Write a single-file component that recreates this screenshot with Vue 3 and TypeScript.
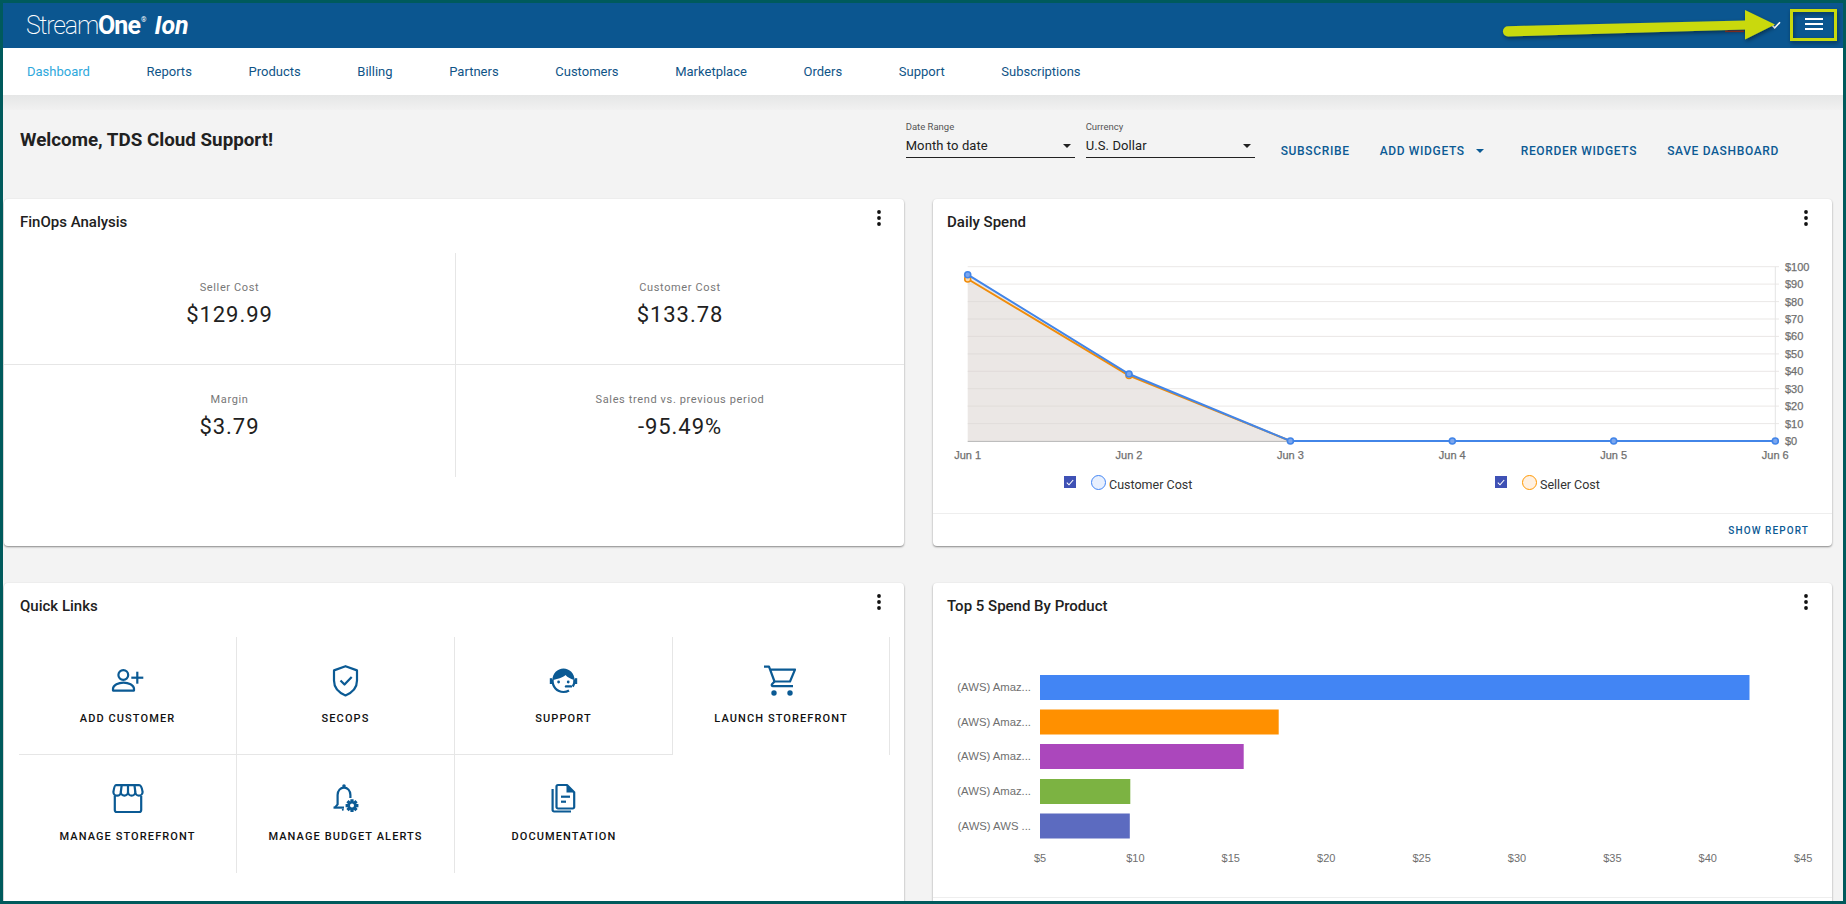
<script setup lang="ts">
interface QuickLink { label: string; stroke: string[]; fill: string[] }

const circle = (cx: number, cy: number, r: number): string =>
  `M${cx - r} ${cy}a${r} ${r} 0 1 0 ${r * 2} 0a${r} ${r} 0 1 0 ${-r * 2} 0Z`

const gear = (cx: number, cy: number, outer: number, inner: number, hole: number): string => {
  const pts: string[] = []
  for (let i = 0; i < 8; i++) {
    const a = (i * Math.PI) / 4
    const w = 0.3
    const p = [
      [inner, a - w * 1.25],
      [outer, a - w * 0.8],
      [outer, a + w * 0.8],
      [inner, a + w * 1.25]
    ]
    for (const [r, t] of p) pts.push(`${(cx + r * Math.cos(t)).toFixed(2)} ${(cy + r * Math.sin(t)).toFixed(2)}`)
  }
  return `M${pts.join('L')}Z${circle(cx, cy, hole)}`
}

const navItems = ['Dashboard', 'Reports', 'Products', 'Billing', 'Partners', 'Customers', 'Marketplace', 'Orders', 'Support', 'Subscriptions']

const stats = [
  { label: 'Seller Cost', value: '$129.99' },
  { label: 'Customer Cost', value: '$133.78' },
  { label: 'Margin', value: '$3.79' },
  { label: 'Sales trend vs. previous period', value: '-95.49%' }
]

const links: QuickLink[] = [
  {
    label: 'Add Customer',
    stroke: [circle(15.3, 11, 4.9), 'M5 26.6v-1.8c0-3.8 5.6-6.2 10.5-6.2s10.5 2.4 10.5 6.2v1.8Z', 'M29.3 7.7v12', 'M23.3 13.7h12'],
    fill: []
  },
  {
    label: 'SecOps',
    stroke: ['M19.5 2.2L31 6.4V16.5C31 23.5 26.3 28.6 19.5 31.4C12.7 28.6 8 23.5 8 16.5V6.4Z', 'M14.5 16.5l4 4l7.2-7.6'],
    fill: []
  },
  {
    label: 'Support',
    stroke: ['M8.6 15.5C8.2 23 13 28 19.5 28C21.5 28 23.4 27.5 25 26.5', 'M30.4 15.5C30.6 18 30.2 20.5 28.8 22.5'],
    fill: [
      'M8.4 16C8.4 9.5 13.5 4.4 19.5 4.4S30.6 9.5 30.6 16C27 15 23.5 13.5 21.5 11C19 13.5 13 15.5 8.4 16Z',
      'M5.8 14.2h2.4v5.8h-2.4Z',
      'M30.8 14.2h2.4v5.8h-2.4Z',
      circle(14.6, 18, 1.4),
      circle(24.2, 18, 1.4),
      'M22 21.2h5a1.2 1.2 0 0 1 0 2.4h-5a1.2 1.2 0 0 1 0-2.4Z'
    ]
  },
  {
    label: 'Launch Storefront',
    stroke: ['M3 2.6H8L13.5 17.5H29L34 5.6H9.2', 'M13.5 17.5L11 20.2C10.4 21 10.8 22.2 12 22.2H32'],
    fill: [circle(13, 29, 2.7), circle(29, 29, 2.7)]
  },
  {
    label: 'Manage Storefront',
    stroke: [
      'M8 3.2H31C33 3.2 34 6 34.6 10A3.6 3.6 0 0 1 27.3 10A3.6 3.6 0 0 1 20 10A3.6 3.6 0 0 1 12.8 10A3.6 3.6 0 0 1 5.4 10C6 6 7 3.2 8 3.2Z',
      'M12.8 10L13.6 3.5', 'M20 10V3.5', 'M27.3 10L26.5 3.5',
      'M6.8 14V28a2 2 0 0 0 2 2H31.2a2 2 0 0 0 2-2V14'
    ],
    fill: []
  },
  {
    label: 'Manage Budget Alerts',
    stroke: ['M7.5 25.6H18', 'M9 25.6L11.6 22.4V13C11.6 8.5 14.5 5.6 18 5.6C21.5 5.6 24.4 8.5 24.4 13V16'],
    fill: [circle(18, 4, 1.8), circle(16.8, 27.8, 1), gear(26, 23.6, 6.6, 4.6, 2)]
  },
  {
    label: 'Documentation',
    stroke: [
      'M14 3H23L30.2 10.2V25A1.5 1.5 0 0 1 28.7 26.5H14A1.5 1.5 0 0 1 12.5 25V4.5A1.5 1.5 0 0 1 14 3Z',
      'M8.6 7V28A1.5 1.5 0 0 0 10.1 29.5H27',
      'M17 14.7H26', 'M17 19.7H22'
    ],
    fill: ['M22.5 3V10.5H30.2Z']
  }
]

const yTop = 266.7
const yBottom = 441
const yStep = (yBottom - yTop) / 10
const gridLines = Array.from({ length: 11 }, (_, i) => ({
  y: +(yTop + i * yStep).toFixed(1),
  label: `$${100 - i * 10}`
}))
const days = [
  { x: 967.7, label: 'Jun 1', cust: 274.7, sell: 279 },
  { x: 1129, label: 'Jun 2', cust: 374, sell: 375.6 },
  { x: 1290.4, label: 'Jun 3', cust: 441, sell: 441 },
  { x: 1452.3, label: 'Jun 4', cust: 441, sell: 441 },
  { x: 1613.7, label: 'Jun 5', cust: 441, sell: 441 },
  { x: 1775.3, label: 'Jun 6', cust: 441, sell: 441 }
]
const custLine = days.map((d) => `${d.x},${d.cust}`).join(' ')
const sellLine = days.map((d) => `${d.x},${d.sell}`).join(' ')
const areaPoly = `${days[0].x},${yBottom} ${custLine} ${days[5].x},${yBottom}`

const bars = [
  { label: '(AWS) Amaz...', y: 675, end: 1749.5, color: '#4285f4' },
  { label: '(AWS) Amaz...', y: 709.5, end: 1278.7, color: '#ff9000' },
  { label: '(AWS) Amaz...', y: 744, end: 1243.7, color: '#ab47bc' },
  { label: '(AWS) Amaz...', y: 779, end: 1130.3, color: '#7cb342' },
  { label: '(AWS) AWS ...', y: 813.5, end: 1129.8, color: '#5c6bc0' }
]
const barTicks = Array.from({ length: 9 }, (_, i) => ({ x: 1040 + i * 95.4, label: `$${5 + i * 5}` }))
</script>

<template>
  <div class="frame">
    <header class="topbar">
      <div class="logo">
        <span class="logo-light">Stream</span><span class="logo-bold">One</span><sup class="logo-reg">®</sup>
        <span class="logo-ion">Ion</span>
      </div>
      <svg class="top-check" width="10" height="8" viewBox="0 0 10 8">
        <path d="M1 4.2L3.7 6.8L9 1.2" fill="none" stroke="#fff" stroke-width="1.6" />
      </svg>
      <button class="burger" type="button" aria-label="Menu">
        <span></span><span></span><span></span>
      </button>
    </header>

    <nav class="nav">
      <a v-for="(item, i) in navItems" :key="item" class="nav-item" :class="{ active: i === 0 }">{{ item }}</a>
    </nav>
    <div class="nav-shadow"></div>

    <section class="toolbar">
      <h1 class="welcome">Welcome, TDS Cloud Support!</h1>
      <div class="controls">
        <div class="select">
          <label>Date Range</label>
          <div class="select-value">Month to date<i class="caret"></i></div>
        </div>
        <div class="select">
          <label>Currency</label>
          <div class="select-value">U.S. Dollar<i class="caret"></i></div>
        </div>
        <div class="actions">
          <a class="action">SUBSCRIBE</a>
          <a class="action">ADD WIDGETS<i class="caret blue"></i></a>
          <a class="action">REORDER WIDGETS</a>
          <a class="action">SAVE DASHBOARD</a>
        </div>
      </div>
    </section>

    <main class="board">
      <article class="card">
        <div class="card-head">
          <h2>FinOps Analysis</h2>
          <svg class="more" width="4" height="16" viewBox="0 0 4 16"><circle cx="2" cy="2" r="1.9" /><circle cx="2" cy="8" r="1.9" /><circle cx="2" cy="14" r="1.9" /></svg>
        </div>
        <div class="stats">
          <div v-for="s in stats" :key="s.label" class="stat">
            <div class="stat-label">{{ s.label }}</div>
            <div class="stat-value">{{ s.value }}</div>
          </div>
        </div>
      </article>

      <article class="card">
        <div class="card-head">
          <h2>Daily Spend</h2>
          <svg class="more" width="4" height="16" viewBox="0 0 4 16"><circle cx="2" cy="2" r="1.9" /><circle cx="2" cy="8" r="1.9" /><circle cx="2" cy="14" r="1.9" /></svg>
        </div>
        <svg class="chart" width="899" height="218" viewBox="933 247 899 218">
          <polygon :points="areaPoly" fill="#ebe7e5" />
          <line v-for="g in gridLines" :key="g.y" :x1="967.7" :x2="1779" :y1="g.y" :y2="g.y" stroke="#d8d4d2" stroke-opacity=".55" />
          <line x1="1775.3" x2="1775.3" y1="266.7" y2="441" stroke="#e4e4e4" />
          <line x1="967.7" x2="1775" y1="441.5" y2="441.5" stroke="#bdbdbd" />
          <polyline :points="sellLine" fill="none" stroke="#f08c0a" stroke-width="2" />
          <circle v-for="d in days.slice(0, 2)" :key="d.label" :cx="d.x" :cy="d.sell" r="3" fill="#fbd9ad" stroke="#f08c0a" stroke-width="1.5" />
          <polyline :points="custLine" fill="none" stroke="#4285e8" stroke-width="2" />
          <circle v-for="d in days" :key="d.label" :cx="d.x" :cy="d.cust" r="3" fill="#7ba6ee" stroke="#4285e8" stroke-width="1.6" />
          <text v-for="g in gridLines" :key="g.label" x="1785" :y="g.y + 4" class="axis heavy">{{ g.label }}</text>
          <text v-for="d in days" :key="d.label" :x="d.x" y="459" class="axis mid heavy">{{ d.label }}</text>
        </svg>
        <div class="legend">
          <div class="legend-item first">
            <span class="check"><svg width="8" height="7" viewBox="0 0 8 7"><path d="M.8 3.6L3 5.8L7.2 1" fill="none" stroke="#fff" stroke-width="1.1" /></svg></span>
            <span class="dot dot-blue"></span>
            <span class="legend-text">Customer Cost</span>
          </div>
          <div class="legend-item second">
            <span class="check"><svg width="8" height="7" viewBox="0 0 8 7"><path d="M.8 3.6L3 5.8L7.2 1" fill="none" stroke="#fff" stroke-width="1.1" /></svg></span>
            <span class="dot dot-orange"></span>
            <span class="legend-text">Seller Cost</span>
          </div>
        </div>
        <div class="card-foot"><a class="show-report">SHOW REPORT</a></div>
      </article>

      <article class="card">
        <div class="card-head">
          <h2>Quick Links</h2>
          <svg class="more" width="4" height="16" viewBox="0 0 4 16"><circle cx="2" cy="2" r="1.9" /><circle cx="2" cy="8" r="1.9" /><circle cx="2" cy="14" r="1.9" /></svg>
        </div>
        <div class="links">
          <div v-for="l in links" :key="l.label" class="link">
            <svg class="link-icon" width="40" height="34" viewBox="0 0 40 34">
              <path v-for="d in l.stroke" :key="d" :d="d" fill="none" stroke="#0b5a94" stroke-width="2.2" stroke-linejoin="round" />
              <path v-for="d in l.fill" :key="d" :d="d" fill="#0b5a94" fill-rule="evenodd" />
            </svg>
            <div class="link-label">{{ l.label }}</div>
          </div>
        </div>
      </article>

      <article class="card">
        <div class="card-head">
          <h2>Top 5 Spend By Product</h2>
          <svg class="more" width="4" height="16" viewBox="0 0 4 16"><circle cx="2" cy="2" r="1.9" /><circle cx="2" cy="8" r="1.9" /><circle cx="2" cy="14" r="1.9" /></svg>
        </div>
        <svg class="chart" width="899" height="240" viewBox="933 631 899 240">
          <g v-for="b in bars" :key="b.y">
            <rect x="1040" :y="b.y" :width="b.end - 1040" height="25" :fill="b.color" />
            <text x="1031" :y="b.y + 16" class="axis end wide">{{ b.label }}</text>
          </g>
          <text v-for="t in barTicks" :key="t.label" :x="t.x" y="862" class="axis mid">{{ t.label }}</text>
        </svg>
        <div class="bar-foot"></div>
      </article>
    </main>

    <svg class="annotation" width="1840" height="60" viewBox="3 3 1840 60">
      <defs>
        <filter id="arrow-shadow" x="-5%" y="-40%" width="110%" height="200%">
          <feDropShadow dx="1" dy="2" stdDeviation="2" flood-color="#000" flood-opacity=".45" />
        </filter>
      </defs>
      <rect x="1725" y="30.5" width="19" height="1.6" fill="#a33a2a" />
      <g filter="url(#arrow-shadow)">
        <path d="M1508 26.2L1745 20.4V10L1775 24.5L1745 39.4V29.6L1508 36.4A5.1 5.1 0 0 1 1508 26.2Z" fill="#c9d90f" />
        <rect x="1791.5" y="10.5" width="44" height="29" fill="none" stroke="#c9d90f" stroke-width="3" />
      </g>
    </svg>
  </div>
</template>

<style>
html, body { margin: 0; padding: 0; }
</style>

<style scoped>
.frame {
  position: relative;
  box-sizing: border-box;
  width: 1846px;
  height: 904px;
  overflow: hidden;
  border: 3px solid #005a5c;
  background: #f3f3f3;
  font-family: Roboto, "Liberation Sans", sans-serif;
  color: #212121;
}

.topbar {
  display: flex;
  align-items: center;
  height: 45px;
  background: #0b5690;
  color: #fff;
}
.logo {
  margin-left: 23px;
  font-size: 25px;
  line-height: 45px;
  white-space: nowrap;
  display: flex;
  align-items: baseline;
}
.logo-light { font-weight: 200; letter-spacing: -1.2px; }
.logo-bold { font-weight: 700; letter-spacing: -.9px; }
.logo-reg { font-size: 7px; line-height: 1; position: relative; top: -12px; margin-left: 1px; }
.logo-ion { font-weight: 700; font-style: italic; margin-left: 8px; letter-spacing: -.2px; }
.top-check { margin-left: auto; margin-top: -2px; }
.burger {
  display: flex;
  flex-direction: column;
  gap: 3px;
  width: 18px;
  margin: -3px 20px 0 24px;
  padding: 0;
  border: 0;
  background: none;
}
.burger span { display: block; height: 2px; background: #fff; }

.nav {
  display: flex;
  align-items: center;
  height: 47px;
  padding-left: 24px;
  background: #fff;
}
.nav-item {
  margin-right: 56.67px;
  font-size: 13px;
  color: #0f5487;
}
.nav-item.active { color: #2ea8dc; }
.nav-shadow {
  height: 15px;
  background: linear-gradient(#e5e6e6, #f1f1f1);
}

.toolbar {
  display: flex;
  justify-content: space-between;
  height: 89px;
  padding: 0 64px 0 17px;
}
.welcome {
  margin: 19px 0 0;
  font-size: 18.8px;
  line-height: 22px;
  font-weight: 700;
}
.controls { display: flex; }
.select {
  box-sizing: border-box;
  width: 169px;
  height: 37px;
  margin: 11px 11px 0 0;
  border-bottom: 1px solid #212121;
}
.select label {
  display: block;
  font-size: 9.5px;
  line-height: 12px;
  color: #555;
}
.select-value {
  display: flex;
  justify-content: space-between;
  align-items: center;
  margin-top: 4px;
  font-size: 13px;
  line-height: 18px;
  letter-spacing: .1px;
}
.caret {
  display: inline-block;
  width: 0;
  height: 0;
  margin-right: 4px;
  border-left: 4px solid transparent;
  border-right: 4px solid transparent;
  border-top: 4px solid #212121;
}
.caret.blue { margin: 0 7px 0 11px; border-top-color: #0b5a94; }
.actions {
  display: flex;
  gap: 30px;
  margin: 33px 0 0 15px;
  height: 16px;
}
.action {
  display: flex;
  align-items: center;
  font-size: 12px;
  font-weight: 500;
  line-height: 16px;
  letter-spacing: .65px;
  color: #0b5a94;
  white-space: nowrap;
}

.board {
  display: grid;
  grid-template-columns: 900px 899px;
  grid-template-rows: 347px 340px;
  column-gap: 29px;
  row-gap: 37px;
  padding-left: 1px;
}
.card {
  border-radius: 4px;
  background: #fff;
  box-shadow: 0 1px 2px rgba(0, 0, 0, .45);
}
.card-head {
  display: flex;
  justify-content: space-between;
  align-items: flex-start;
  height: 48px;
  padding: 0 24px 0 14px;
}
.card:nth-child(odd) .card-head { padding: 0 23px 0 16px; }
.card-head h2 {
  margin: 14px 0 0;
  font-size: 15px;
  line-height: 18px;
  font-weight: 500;
}
.more { margin-top: 11px; fill: #111; }

.stats {
  display: grid;
  grid-template-columns: 452px 448px;
  grid-template-rows: 112px 112px;
  margin-top: 6px;
  text-align: center;
}
.stat { padding-top: 28px; box-sizing: border-box; }
.stat:nth-child(odd) { border-right: 1px solid #e6e6e6; }
.stat:nth-child(-n+2) { border-bottom: 1px solid #e6e6e6; }
.stat-label {
  font-size: 11px;
  line-height: 14px;
  letter-spacing: .63px;
  color: #777;
}
.stat-value {
  margin-top: 6px;
  font-size: 22px;
  line-height: 28px;
  letter-spacing: .95px;
}

.chart { display: block; }
.axis {
  font-family: "Liberation Sans", Arial, sans-serif;
  font-size: 11px;
  fill: #6f6f6f;
}
.axis.heavy { stroke: #6f6f6f; stroke-width: .25px; }
.axis.mid { text-anchor: middle; }
.axis.end { text-anchor: end; }
.axis.wide { font-size: 11.3px; }

.legend { display: flex; height: 48px; }
.legend-item { display: flex; align-items: flex-start; padding-top: 11px; }
.legend-item.first { margin-left: 131px; width: 431px; }
.check {
  display: flex;
  align-items: center;
  justify-content: center;
  width: 12px;
  height: 12px;
  background: #3f51b5;
}
.dot {
  box-sizing: border-box;
  width: 15px;
  height: 15px;
  margin: -1.5px 3px 0 15px;
  border-radius: 50%;
  border: 1px solid;
}
.dot-blue { background: #e8f0fe; border-color: #4285f4; }
.dot-orange { background: #fff1e2; border-color: #ff9800; }
.legend-text { font-size: 12.5px; line-height: 18px; color: #333; }
.card-foot {
  display: flex;
  justify-content: flex-end;
  align-items: center;
  box-sizing: border-box;
  height: 33px;
  padding-right: 23px;
  border-top: 1px solid #eee;
}
.show-report {
  font-size: 10px;
  font-weight: 500;
  letter-spacing: 1.1px;
  color: #0b5a94;
}
.bar-foot { height: 26px; border-bottom: 1px solid #eee; }

.links {
  display: grid;
  grid-template-columns: repeat(3, 218px) 217px;
  grid-auto-rows: 118px;
  margin: 6px 0 0 15px;
  text-align: center;
}
.link { box-sizing: border-box; padding-top: 27px; border-right: 1px solid #e6e6e6; }
.link:nth-child(-n+3) { border-bottom: 1px solid #e6e6e6; }
.link:last-child { border-right: 0; }
.link-icon { display: block; margin: 0 auto; }
.link-label {
  margin-top: 13px;
  font-size: 11px;
  font-weight: 500;
  line-height: 16px;
  letter-spacing: 1.1px;
  text-transform: uppercase;
  color: #111;
}

.annotation { position: absolute; left: 0; top: 0; pointer-events: none; }
</style>
